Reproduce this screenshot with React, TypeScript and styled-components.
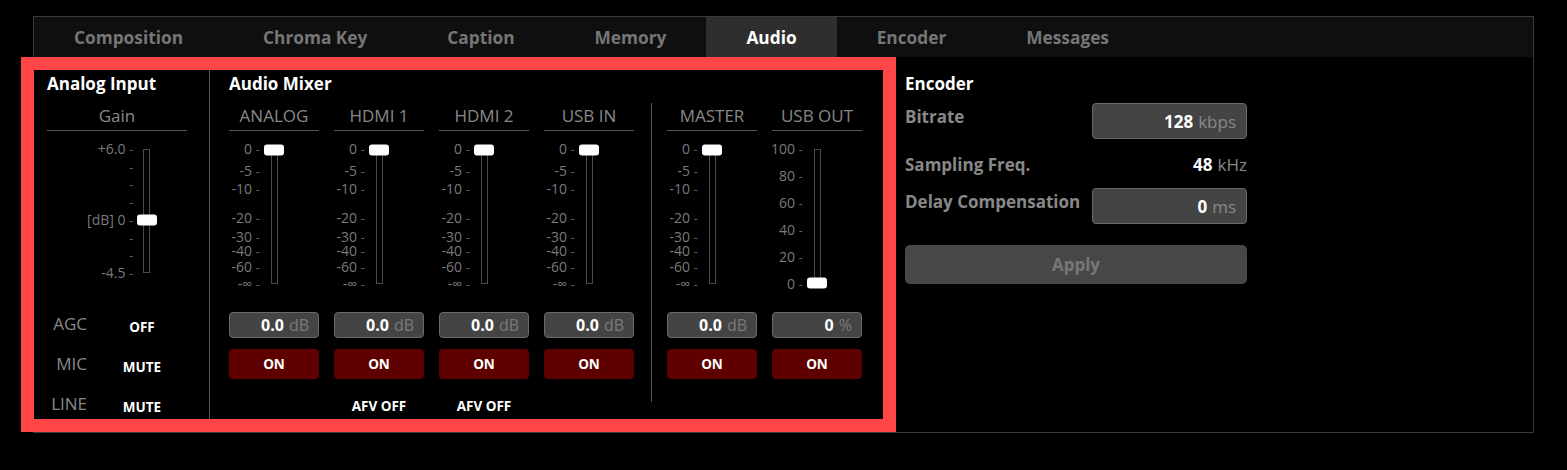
import styled, { createGlobalStyle } from "styled-components";

type Tick = { label?: string; pos: number };

const dbTicks: Tick[] = [
  { label: "0", pos: 0 },
  { label: "-5", pos: 0.163 },
  { label: "-10", pos: 0.296 },
  { label: "-20", pos: 0.511 },
  { label: "-30", pos: 0.652 },
  { label: "-40", pos: 0.756 },
  { label: "-60", pos: 0.874 },
  { label: "-∞", pos: 1 },
];

const percentTicks: Tick[] = ["100", "80", "60", "40", "20", "0"].map((label, i) => ({
  label,
  pos: i / 5,
}));

const gainTicks: Tick[] = ["+6.0", "", "", "", "[dB] 0", "", "", "-4.5"].map((label, i) => ({
  label,
  pos: i / 7,
}));

type Channel = { name: string; unit: string; afv?: boolean; ticks: Tick[]; value: number };

const inputs: Channel[] = [
  { name: "ANALOG", unit: "dB", ticks: dbTicks, value: 0 },
  { name: "HDMI 1", unit: "dB", ticks: dbTicks, value: 0, afv: true },
  { name: "HDMI 2", unit: "dB", ticks: dbTicks, value: 0, afv: true },
  { name: "USB IN", unit: "dB", ticks: dbTicks, value: 0 },
];

const outputs: Channel[] = [
  { name: "MASTER", unit: "dB", ticks: dbTicks, value: 0 },
  { name: "USB OUT", unit: "%", ticks: percentTicks, value: 1 },
];

const tabs = ["Composition", "Chroma Key", "Caption", "Memory", "Audio", "Encoder", "Messages"];

type FaderProps = { ticks: Tick[]; value: number; height: number; labelWidth?: number; gap: number };

const Fader = ({ ticks, value, height, labelWidth, gap }: FaderProps) => (
  <FaderGrid $labelWidth={labelWidth} $gap={gap}>
    <Scale $height={height}>
      {ticks.map((t, i) => (
        <ScaleLabel key={i} style={{ top: `${t.pos * 100}%` }}>
          {t.label ? `${t.label} ` : ""}
          <Dash>-</Dash>
        </ScaleLabel>
      ))}
    </Scale>
    <Track $height={height}>
      <Thumb style={{ top: `${value * 100}%` }} />
    </Track>
  </FaderGrid>
);

const ChannelStrip = ({ ch }: { ch: Channel }) => (
  <Strip>
    <ColumnHeader>{ch.name}</ColumnHeader>
    <FaderArea>
      <Fader ticks={ch.ticks} value={ch.value} height={135} gap={11} />
    </FaderArea>
    <ValueBox>
      <Num>{ch.unit === "%" ? "0" : "0.0"}</Num>
      <Unit>{ch.unit}</Unit>
    </ValueBox>
    <OnButton>ON</OnButton>
    {ch.afv && <AfvLabel>AFV OFF</AfvLabel>}
  </Strip>
);

export default function App() {
  return (
    <Page>
      <GlobalStyle />
      <Panel>
        <TabBar>
          {tabs.map((t) => (
            <Tab key={t} $active={t === "Audio"}>
              {t}
            </Tab>
          ))}
        </TabBar>
        <Content>
          <AudioSection>
            <AnalogColumn>
              <SectionTitle>Analog Input</SectionTitle>
              <ColumnHeader>Gain</ColumnHeader>
              <Fader ticks={gainTicks} value={4 / 7} height={124} labelWidth={86} gap={10} />
              <SwitchList>
                <SwitchLabel>AGC</SwitchLabel>
                <SwitchValue>OFF</SwitchValue>
                <SwitchLabel>MIC</SwitchLabel>
                <SwitchValue>MUTE</SwitchValue>
                <SwitchLabel>LINE</SwitchLabel>
                <SwitchValue>MUTE</SwitchValue>
              </SwitchList>
            </AnalogColumn>
            <MixerColumn>
              <SectionTitle>Audio Mixer</SectionTitle>
              <ChannelRow>
                {inputs.map((ch) => (
                  <ChannelStrip key={ch.name} ch={ch} />
                ))}
                <GroupDivider />
                {outputs.map((ch) => (
                  <ChannelStrip key={ch.name} ch={ch} />
                ))}
              </ChannelRow>
            </MixerColumn>
          </AudioSection>
          <EncoderColumn>
            <SectionTitle>Encoder</SectionTitle>
            <Field $top={-2}>
              <FieldLabel>Bitrate</FieldLabel>
              <InputBox>
                <Num>128</Num>
                <FieldUnit>kbps</FieldUnit>
              </InputBox>
            </Field>
            <Field $top={15}>
              <FieldLabel $plain>Sampling Freq.</FieldLabel>
              <PlainValue>
                <Num>48</Num>
                <FieldUnit>kHz</FieldUnit>
              </PlainValue>
            </Field>
            <Field $top={12}>
              <FieldLabel>Delay Compensation</FieldLabel>
              <InputBox>
                <Num>0</Num>
                <FieldUnit>ms</FieldUnit>
              </InputBox>
            </Field>
            <ApplyButton>Apply</ApplyButton>
          </EncoderColumn>
        </Content>
      </Panel>
    </Page>
  );
}

const GlobalStyle = createGlobalStyle`
  body {
    margin: 0;
    background: #000;
    font-family: "Open Sans", "Noto Sans", sans-serif;
  }
`;

const Page = styled.div`
  padding: 16px 0 0 33px;
`;

const Panel = styled.div`
  width: 1501px;
  box-sizing: border-box;
  border: 1px solid #3a3a3a;
`;

const TabBar = styled.div`
  display: flex;
  height: 40px;
  background: #0f0f0f;
`;

const Tab = styled.div<{ $active?: boolean }>`
  display: flex;
  align-items: center;
  padding: 0 40px;
  font-size: 17.3px;
  font-weight: 700;
  color: ${(p) => (p.$active ? "#fff" : "#767676")};
  background: ${(p) => (p.$active ? "#2e2e2e" : "transparent")};
`;

const Content = styled.div`
  display: flex;
  height: 375px;
`;

const AudioSection = styled.div`
  position: relative;
  display: flex;
  width: 849px;

  &::after {
    content: "";
    position: absolute;
    top: 0;
    bottom: 0;
    left: -13px;
    right: -13px;
    border: 13px solid #ff4545;
    pointer-events: none;
  }
`;

const SectionTitle = styled.div`
  font-size: 17px;
  line-height: 22px;
  font-weight: 700;
  color: #fff;
  margin-bottom: 10px;
`;

const AnalogColumn = styled.div`
  width: 176px;
  box-sizing: border-box;
  padding: 16px 22px 0 13px;
  border-right: 1px solid #555;
`;

const ColumnHeader = styled.div`
  font-size: 17px;
  line-height: 22px;
  color: #888;
  text-align: center;
  padding-bottom: 3px;
  border-bottom: 1px solid #555;
`;

const FaderGrid = styled.div<{ $labelWidth?: number; $gap: number }>`
  display: grid;
  grid-template-columns: ${(p) => (p.$labelWidth ? `${p.$labelWidth}px 7px 1fr` : "1fr 7px 1fr")};
  column-gap: ${(p) => p.$gap}px;
  padding-top: 18px;
`;

const Scale = styled.div<{ $height: number }>`
  position: relative;
  height: ${(p) => p.$height}px;
`;

const ScaleLabel = styled.div`
  position: absolute;
  right: 0;
  transform: translateY(-50%);
  font-size: 14px;
  line-height: 1;
  color: #7a7a7a;
  white-space: nowrap;
`;

const Dash = styled.span`
  color: #666;
  font-size: 12px;
`;

const Track = styled.div<{ $height: number }>`
  position: relative;
  width: 7px;
  height: ${(p) => p.$height}px;
  box-sizing: border-box;
  border: 1px solid #4a4a4a;
`;

const Thumb = styled.div`
  position: absolute;
  left: 50%;
  width: 20px;
  height: 11px;
  transform: translate(-50%, -50%);
  background: #fff;
  border-radius: 3px;
`;

const SwitchList = styled.div`
  display: grid;
  grid-template-columns: 40px 1fr;
  grid-auto-rows: 40px;
  align-items: center;
  margin-top: 30px;
`;

const SwitchLabel = styled.div`
  font-size: 17px;
  color: #888;
  text-align: right;
`;

const SwitchValue = styled.div`
  padding: 8px 0 0 10px;
  font-size: 13.5px;
  font-weight: 700;
  color: #fff;
  text-align: center;
`;

const MixerColumn = styled.div`
  padding: 16px 21px 0 19px;
`;

const ChannelRow = styled.div`
  display: flex;
  align-items: flex-start;
  gap: 15px;
`;

const Strip = styled.div`
  width: 90px;
  display: flex;
  flex-direction: column;
`;

const FaderArea = styled.div`
  padding-bottom: 28px;
`;

const ValueBox = styled.div`
  display: flex;
  align-items: center;
  justify-content: flex-end;
  height: 26px;
  box-sizing: border-box;
  padding-right: 9px;
  background: #444;
  border: 1px solid #6a6a6a;
  border-radius: 4px;
  font-size: 16px;
`;

const Num = styled.span`
  font-weight: 700;
  color: #fff;
`;

const Unit = styled.span`
  margin-left: 5px;
  color: #7a7a7a;
`;

const OnButton = styled.button`
  margin-top: 11px;
  height: 30px;
  border: none;
  border-radius: 4px;
  background: #5e0000;
  color: #fff;
  font-family: inherit;
  font-size: 13.5px;
  font-weight: 700;
  padding: 0;
`;

const AfvLabel = styled.div`
  margin-top: 16px;
  line-height: 22px;
  font-size: 13.5px;
  font-weight: 700;
  color: #fff;
  text-align: center;
`;

const GroupDivider = styled.div`
  width: 1px;
  height: 299px;
  margin: -2px 0 0 2px;
  background: #555;
`;

const EncoderColumn = styled.div`
  width: 342px;
  padding: 16px 0 0 22px;
`;

const Field = styled.div<{ $top: number }>`
  display: flex;
  align-items: flex-start;
  margin-top: ${(p) => p.$top}px;
`;

const FieldLabel = styled.div<{ $plain?: boolean }>`
  width: 187px;
  padding-top: ${(p) => (p.$plain ? 0 : 3)}px;
  font-size: 17px;
  line-height: 22px;
  font-weight: 700;
  color: #888;
  white-space: nowrap;
`;

const InputBox = styled.div`
  display: flex;
  align-items: center;
  justify-content: flex-end;
  width: 155px;
  height: 36px;
  box-sizing: border-box;
  padding-right: 10px;
  background: #444;
  border: 1px solid #6a6a6a;
  border-radius: 4px;
  font-size: 17px;
`;

const FieldUnit = styled.span`
  margin-left: 5px;
  color: #888;
`;

const PlainValue = styled.div`
  width: 155px;
  text-align: right;
  font-size: 17px;
  line-height: 22px;
`;

const ApplyButton = styled.button`
  display: block;
  width: 342px;
  height: 39px;
  margin-top: 21px;
  border: none;
  border-radius: 5px;
  background: #474747;
  color: #777;
  font-family: inherit;
  font-size: 17px;
  font-weight: 700;
`;
